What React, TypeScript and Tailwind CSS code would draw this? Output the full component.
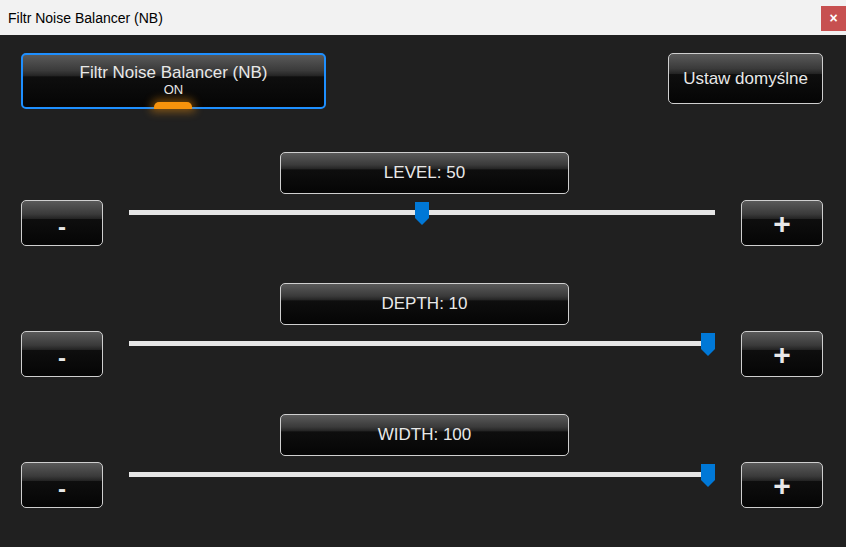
import { useState } from 'react'

const btnBase =
  'relative rounded-[5px] border bg-[linear-gradient(to_bottom,#5a5a5a_0%,#3a3a3a_30%,#242424_40%,#0e0e0e_42%,#050505_100%)] text-[#e8e8e8] font-["Liberation_Sans",Arial,sans-serif]'
const btn = `${btnBase} border-[#cfcfcf]`

function Slider({ value, max }: { value: number; max: number }) {
  const pct = value / max
  return (
    <div className="relative mx-[26px] mt-[2px] h-[24px] flex-1">
      <div className="mt-[8px] h-[5px] w-full bg-[#e6e6e6]" />
      <div className="absolute top-0 h-full w-[14px]" style={{ left: `calc(${pct} * (100% - 14px))` }}>
        <svg width="14" height="24" viewBox="0 0 14 24">
          <path d="M0 0H14V16L7 23L0 16Z" fill="#0078d7" />
        </svg>
      </div>
    </div>
  )
}

function Row({ label, value, max }: { label: string; value: number; max: number }) {
  return (
    <div className="flex flex-col">
      <div className="flex justify-center pl-[3px]">
        <div className={`${btn} flex h-[42px] w-[289px] items-center justify-center text-[17px]`}>
          {label}: {value}
        </div>
      </div>
      <div className="mt-[6px] flex items-start pl-[21px] pr-[23px]">
        <button className={`${btn} h-[46px] w-[82px] pt-[8px] text-[24px] font-bold`}>-</button>
        <Slider value={value} max={max} />
        <button className={`${btn} h-[46px] w-[82px] pt-[2px] text-[30px] font-bold leading-none`}>+</button>
      </div>
    </div>
  )
}

export default function App() {
  const [on] = useState(true)
  return (
    <div className="flex h-[547px] w-[846px] flex-col overflow-hidden bg-[#202020]">
      <div className="flex h-[35px] shrink-0 items-start justify-between bg-[#f2f2f2]">
        <span className="mt-[8px] pl-[8px] font-['Liberation_Sans',Arial,sans-serif] text-[14px] text-black">
          Filtr Noise Balancer (NB)
        </span>
        <div className="mt-[6px] flex h-[25px] w-[25px] items-center justify-center bg-[#c75050] font-['Liberation_Sans',Arial,sans-serif] text-[14px] font-bold text-white">
          ×
        </div>
      </div>

      <div className="flex items-start justify-between pt-[18px] pl-[21px] pr-[23px]">
        <button
          className={`${btnBase} flex h-[56px] w-[305px] flex-col items-center border-2 border-[#1e8fff] pt-[8px]`}
        >
          <span className="text-[17px] leading-[19px]">Filtr Noise Balancer (NB)</span>
          <span className="text-[13px] leading-[15px]">{on ? 'ON' : 'OFF'}</span>
          <span className="absolute bottom-[-2px] left-[131px] h-[7px] w-[38px] rounded-t-[5px] bg-[#f7930c] shadow-[0_0_8px_3px_rgba(247,147,12,0.45)]" />
        </button>
        <button className={`${btn} h-[51px] w-[155px] text-[17px]`}>Ustaw domyślne</button>
      </div>

      <div className="mt-[43px] flex flex-col gap-[37px]">
        <Row label="LEVEL" value={50} max={100} />
        <Row label="DEPTH" value={10} max={10} />
        <Row label="WIDTH" value={100} max={100} />
      </div>
    </div>
  )
}
